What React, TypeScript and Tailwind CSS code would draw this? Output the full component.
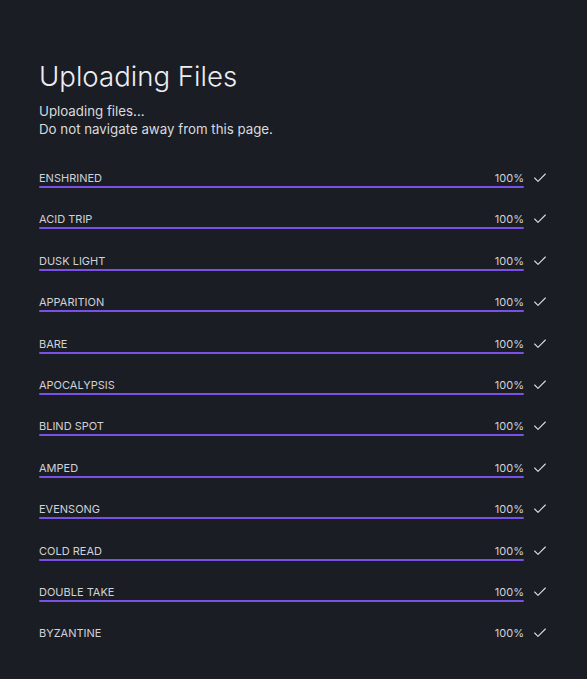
import { Check } from "lucide-react";

const files = [
  { name: "ENSHRINED", progress: 100, bar: true },
  { name: "ACID TRIP", progress: 100, bar: true },
  { name: "DUSK LIGHT", progress: 100, bar: true },
  { name: "APPARITION", progress: 100, bar: true },
  { name: "BARE", progress: 100, bar: true },
  { name: "APOCALYPSIS", progress: 100, bar: true },
  { name: "BLIND SPOT", progress: 100, bar: true },
  { name: "AMPED", progress: 100, bar: true },
  { name: "EVENSONG", progress: 100, bar: true },
  { name: "COLD READ", progress: 100, bar: true },
  { name: "DOUBLE TAKE", progress: 100, bar: true },
  { name: "BYZANTINE", progress: 100, bar: false },
];

export default function App() {
  return (
    <div
      className="min-h-[679px] w-full bg-[#1b1d24] text-[#e4e5ea] px-[39px] pt-[59px]"
      style={{ fontFamily: "Inter, 'Noto Sans', sans-serif" }}
    >
      <h1 className="text-[27.6px] leading-[34px] font-light tracking-[0px] text-[#eceef2]">
        Uploading Files
      </h1>
      <div className="mt-[9px] text-[13.3px] leading-[18px] text-[#d8dadf]">
        <p>Uploading files...</p>
        <p>Do not navigate away from this page.</p>
      </div>

      <div className="mt-[33px] flex flex-col gap-[24.4px] w-[509px]">
        {files.map((f) => (
          <div key={f.name} className="flex items-start">
            <div className="flex-1">
              <div className="flex items-center justify-between text-[11px] leading-[14px] text-[#d0d2d8]">
                <span>{f.name}</span>
                <span>{f.progress}%</span>
              </div>
              <div className="mt-px h-[2px] w-full">
                {f.bar && (
                  <div
                    className="h-full bg-[#7a50e6] rounded-full"
                    style={{ width: `${f.progress}%` }}
                  />
                )}
              </div>
            </div>
            <div className="ml-[8px] h-[14px] flex items-center">
              <Check size={16} strokeWidth={1.6} className="text-[#dcdee3]" />
            </div>
          </div>
        ))}
      </div>
    </div>
  );
}
